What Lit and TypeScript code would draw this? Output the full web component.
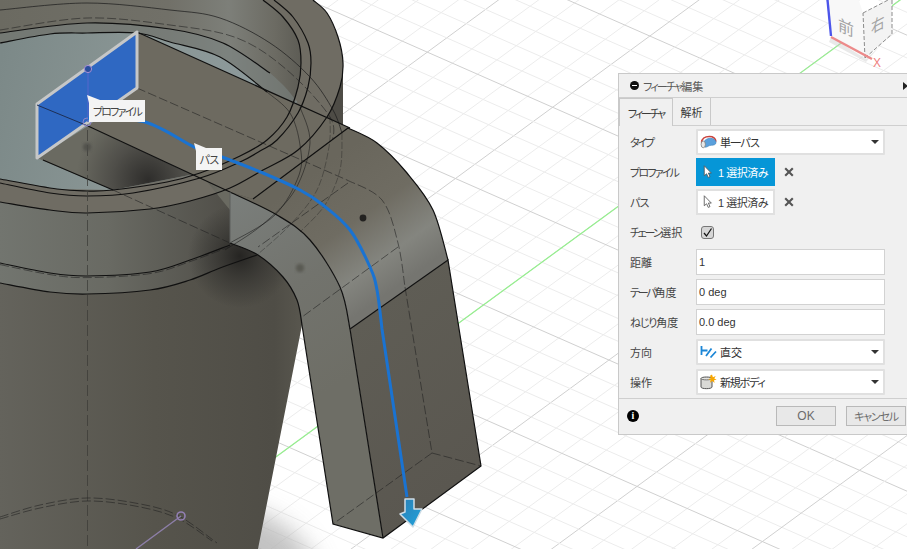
import { LitElement, html, css, svg } from "lit";
import { customElement } from "lit/decorators.js";

type P = [number, number];

// Smooth curve through traced points (Catmull-Rom to Bezier).
function cr(pts: P[], close = ""): string {
  let d = `M${pts[0][0]} ${pts[0][1]}`;
  for (let i = 0; i < pts.length - 1; i++) {
    const p0 = pts[Math.max(0, i - 1)], p1 = pts[i], p2 = pts[i + 1], p3 = pts[Math.min(pts.length - 1, i + 2)];
    const c1x = p1[0] + (p2[0] - p0[0]) / 6, c1y = p1[1] + (p2[1] - p0[1]) / 6;
    const c2x = p2[0] - (p3[0] - p1[0]) / 6, c2y = p2[1] - (p3[1] - p1[1]) / 6;
    d += `C${c1x.toFixed(1)} ${c1y.toFixed(1)} ${c2x.toFixed(1)} ${c2y.toFixed(1)} ${p2[0]} ${p2[1]}`;
  }
  return d + close;
}

const L1: P[] = [[0,179],[57,189],[87,191],[113,190],[167,182],[200,173],[240,156],[267,140],[287,117],[298,87],[301,63],[298,40],[283,17],[263,0]];
const L2: P[] = [[0,183],[50,193],[87,196],[133,193],[200,178],[240,162],[260,151],[277,140],[298,113],[308,87],[311,63],[308,43],[293,17],[274,0]];
const L3: P[] = [[0,202],[50,210],[87,213],[150,209],[190,201],[230,188],[263,170],[298,150],[327,117],[340,87],[343,63],[338,37],[327,13],[313,0]];
const L4: P[] = [[0,263],[50,273],[87,276],[150,272],[190,260],[230,245]];
const L5: P[] = [[0,283],[50,292],[87,294],[150,290],[190,280],[220,268],[257,255]];
const A: P[] = [[0,10],[87,3],[170,10],[220,18],[270,43],[310,77],[333,110],[342,133]];
const B: P[] = [[0,30],[87,18],[170,25],[237,38],[287,70],[330,117],[332,143]];
const C: P[] = [[0,33],[87,23],[170,29],[223,43],[270,73],[300,107],[310,143]];
const D: P[] = [[0,43],[50,34],[87,33],[137,33],[170,42],[220,57],[267,92]];
const G1: P[] = [[267,92],[290,113],[300,145],[299,175],[275,215],[230,243]];
const G2: P[] = [[300,107],[310,143],[295,190],[262,225],[225,250]];
const G3: P[] = [[330,117],[329,147],[317,190],[290,225],[257,255]];
const G4: P[] = [[342,133],[340,170],[325,205],[300,232]];
const mid: P[] = [[230,192],[277,215],[310,240],[340,287],[350,329]];
const inner: P[] = [[230,243],[258,255],[283,277],[297,300],[302,325]];
const outer: P[] = [[348,128],[377,143],[407,173],[433,210],[448,260]];
const backDash: P[] = [[347,180],[382,200],[398,243],[405,287]];
const path: P[] = [[88,118],[145,122],[196,148],[222,157],[263,173],[300,190],[323,205],[350,230],[370,267],[377,290],[382,329]];

const rev = (p: P[]) => [...p].reverse();

function grid() {
  const out = [];
  for (let k = -40; k <= 40; k++) {
    const major = k % 5 === 0;
    const a = 107 + 22.8 * k;
    out.push(svg`<line class=${major ? "gmaj" : "gmin"} x1="0" y1=${a + 0.44 * (0 - 552)} x2="907" y2=${a + 0.44 * (907 - 552)}></line>`);
    const b = 427 + 29.4 * k;
    out.push(svg`<line class=${major ? "gmaj" : "gmin"} x1="0" y1=${b - 0.733 * (0 - 317)} x2="907" y2=${b - 0.733 * (907 - 317)}></line>`);
  }
  return out;
}

function scene() {
  return svg`
  <svg class="scene" viewBox="0 0 907 549" width="907" height="549">
    <defs>
      <linearGradient id="body" x1="0" x2="1" y1="0" y2="0">
        <stop offset="0" stop-color="#64635c"/><stop offset=".45" stop-color="#56544c"/>
        <stop offset=".8" stop-color="#4f4d46"/><stop offset=".93" stop-color="#5e5c53"/><stop offset="1" stop-color="#6c6a61"/>
      </linearGradient>
      <linearGradient id="band" gradientUnits="userSpaceOnUse" x1="0" x2="240" y1="0" y2="0">
        <stop offset="0" stop-color="#72756f"/><stop offset=".45" stop-color="#696a63"/><stop offset="1" stop-color="#4e4c46"/>
      </linearGradient>
      <linearGradient id="wall" gradientUnits="userSpaceOnUse" x1="0" x2="305" y1="0" y2="0">
        <stop offset="0" stop-color="#6b6a61"/><stop offset=".55" stop-color="#717068"/>
        <stop offset=".75" stop-color="#7d7f79"/><stop offset=".9" stop-color="#6c6b63"/><stop offset="1" stop-color="#5b5a53"/>
      </linearGradient>
      <linearGradient id="cavity" gradientUnits="userSpaceOnUse" x1="0" x2="280" y1="60" y2="120">
        <stop offset="0" stop-color="#7c8988"/><stop offset=".5" stop-color="#8a9695"/><stop offset="1" stop-color="#8d9a9c"/>
      </linearGradient>
      <linearGradient id="bend" gradientUnits="userSpaceOnUse" x1="310" y1="175" x2="392" y2="290">
        <stop offset="0" stop-color="#69665c"/><stop offset=".45" stop-color="#6f6c62"/>
        <stop offset=".78" stop-color="#84857f"/><stop offset="1" stop-color="#757570"/>
      </linearGradient>
      <linearGradient id="strip" gradientUnits="userSpaceOnUse" x1="230" y1="200" x2="345" y2="380">
        <stop offset="0" stop-color="#7a7e7b"/><stop offset=".5" stop-color="#72736d"/><stop offset="1" stop-color="#6e6e66"/>
      </linearGradient>
      <linearGradient id="front" gradientUnits="userSpaceOnUse" x1="350" y1="330" x2="470" y2="470">
        <stop offset="0" stop-color="#5f5d55"/><stop offset="1" stop-color="#5a5750"/>
      </linearGradient>
      <radialGradient id="dark" gradientUnits="userSpaceOnUse" cx="148" cy="180" r="72">
        <stop offset="0" stop-color="#2e2d2b"/><stop offset=".5" stop-color="#4f4e49"/><stop offset="1" stop-color="#6a6a61"/>
      </radialGradient>
      <radialGradient id="under" gradientUnits="userSpaceOnUse" cx="240" cy="256" r="52">
        <stop offset="0" stop-color="#232220" stop-opacity=".95"/><stop offset=".6" stop-color="#33322f" stop-opacity=".5"/><stop offset="1" stop-color="#33322f" stop-opacity="0"/>
      </radialGradient>
      <linearGradient id="arrow" x1="0" x2="1" y1="0" y2="1">
        <stop offset="0" stop-color="#2b7fb5"/><stop offset="1" stop-color="#21a3dc"/>
      </linearGradient>
      <filter id="blur" x="-50%" y="-50%" width="200%" height="200%"><feGaussianBlur stdDeviation="12"/></filter>
      <filter id="soft" x="-20%" y="-20%" width="140%" height="140%"><feGaussianBlur stdDeviation="1.6"/></filter>
    </defs>

    <rect width="907" height="549" fill="#fff"></rect>
    ${grid()}
    <line class="green" x1="258" y1="470" x2="907" y2="-5"></line>
    <ellipse cx="205" cy="590" rx="115" ry="88" fill="#b4b4b4" opacity=".8" filter="url(#blur)"></ellipse>

    <!-- view cube -->
    <polygon points="828,-2 832,36 865,58 863,13 858,-2" fill="#f8f8f8"></polygon>
    <polygon points="865,58 892,34 892,-2 863,13" fill="#f3f3f3"></polygon>
    <polygon points="831,37 866,59 892,35 880,46 866,62 829,42" fill="#c9c9c9" opacity=".4"></polygon>
    <line class="cubeedge" x1="865" y1="58" x2="863" y2="13"></line>
    <line class="cubeedge" x1="865" y1="58" x2="892" y2="34"></line>
    <line class="cubeedge" x1="892" y1="34" x2="892" y2="-2"></line>
    <line class="cubeedge" x1="863" y1="13" x2="892" y2="-2"></line>
    <line x1="827.5" y1="0" x2="831" y2="36" stroke="#4c55ea" stroke-width="2.4"></line>
    <line x1="831" y1="37" x2="872" y2="59" stroke="#ec8a8a" stroke-width="2.4"></line>
    <text class="cubetxt" transform="translate(838,30) skewY(24)">前</text>
    <text class="cubetxt" transform="translate(871,34) skewY(-28) scale(.85,1)">右</text>
    <text class="xlabel" x="873" y="67">X</text>

    <!-- mug body, painted from the bottom up -->
    <path fill="url(#body)" d="M0 0H313L343 67V130L302 325L258 549H0Z"></path>
    <path fill="url(#band)" d=${cr(L5) + "L343 130V60L0 180Z"}></path>
    <path d="M180 200H302V325H180Z" fill="url(#under)"></path>
    <path fill="#6f6c63" d=${cr(L3) + "L0 0Z"}></path>
    <path fill="url(#wall)" d=${cr(L1) + "L0 0Z"}></path>
    <path fill="#7b8584" opacity=".55" d=${cr(C) + cr(rev(D)).replace("M", "L") + "Z"}></path>
    <path fill="url(#cavity)" d=${cr(D) + "L292 113L297 100L267 140L240 156L200 173L113 190L57 189L0 179Z"}></path>

    <!-- swept box over the cup -->
    <polygon fill="url(#dark)" points="37,158 88,126 230,192 230,210 200,173 113,190"></polygon>
    <polygon fill="#6d6a60" points="137,32 350,128 253,199 230,192 88,126 137,88"></polygon>

    <!-- rim lines on the box and the cup -->
    <path class="solid" d=${cr(L1)}></path>
    <path class="solid" d=${cr(L2)}></path>
    <path class="solid" d=${cr(L3)}></path>
    <path class="thin" d=${cr(A)}></path>
    <path class="dash" d=${cr(B)}></path>
    <path class="solid" d=${cr(C.slice(0, 5))}></path>
    <path class="solid" d=${cr(D)}></path>
    <path class="solid" d=${cr(L4)}></path>
    <path class="dash" transform="translate(0,1.6)" d=${cr(L4)}></path>
    <path class="solid" d=${cr(L5)}></path>

    <!-- handle -->
    <path fill="url(#strip)" d=${cr(mid) + "L383 538L333 524L302 325" + cr(rev(inner)).replace("M302 325", "") + "Z"}></path>
    <path fill="url(#bend)" d=${cr(outer) + "L350 329" + cr(rev(mid)).replace("M350 329", "") + "L253 199Z"}></path>
    <polygon fill="url(#front)" points="350,329 448,260 481,466 383,538"></polygon>

    <!-- hidden edges seen through -->
    <path class="ghost" d=${cr(G1)}></path>
    <path class="ghost" d=${cr(G2)}></path>
    <path class="ghostdash" d=${cr(G3)}></path>
    <path class="ghostdash" d=${cr(G4)}></path>
    <path class="dash" d="M137 88L347 180"></path>
    <path class="dash" d=${cr(backDash)}></path>
    <path class="dash" d="M405 287L432 453L481 466M432 453L333 524"></path>
    <path class="dash" d="M348 183L258 247M398 247L302 317"></path>
    <path class="dash" d="M113 190L230 243"></path>

    <!-- handle edges -->
    <path class="solid" d=${cr(outer)}></path>
    <path class="solid" d=${cr(mid)}></path>
    <path class="solid" d=${cr(inner)}></path>
    <path class="solid" d="M137 32L350 128M348 128L253 199M88 126L230 192M43 160L113 190M302 325L333 524L383 538L481 466L448 260L350 329L383 538"></path>
    <line x1="230" y1="192" x2="230" y2="243" stroke="#5d5f5c" stroke-width="1"></line>

    <!-- axis and construction marks -->
    <line class="axis" x1="87.5" y1="70" x2="87.5" y2="549"></line>
    <path class="dash" d=${cr([[0,517],[40,505],[87,498],[135,503],[177,515],[217,543]])}></path>
    <path class="dash" d=${cr([[0,519],[40,508],[87,501],[135,506],[177,518],[212,541]])}></path>
    <line x1="136" y1="549" x2="181" y2="516" stroke="#8d7fa8" stroke-width="1.4"></line>
    <circle cx="181" cy="516" r="4" fill="none" stroke="#9380b4" stroke-width="1.6"></circle>
    <circle cx="87" cy="147" r="4" fill="#4c4b46" opacity=".8" filter="url(#soft)"></circle>
    <circle cx="300" cy="268" r="4.2" fill="#55544e" opacity=".85" filter="url(#soft)"></circle>
    <circle cx="363" cy="218" r="3.4" fill="#232220"></circle>

    <!-- profile -->
    <polygon points="37,104 137,32 137,88 37,158" fill="#2f68c2" stroke="#c6c7c7" stroke-width="3" stroke-linejoin="round"></polygon>
    <line x1="37" y1="105" x2="88" y2="126" stroke="#1d2f55" stroke-width="1"></line>
    <line x1="88" y1="70" x2="88" y2="122" stroke="#4a67c8" stroke-width="1.5"></line>
    <circle cx="88" cy="69" r="3.6" fill="#2a4f9c" stroke="#a78fd6" stroke-width="1"></circle>
    <circle cx="87" cy="122" r="4" fill="none" stroke="#8f86c8" stroke-width="1"></circle>

    <!-- sweep path -->
    <path d=${cr(path) + "L407 497"} fill="none" stroke="#1a73d2" stroke-width="3"></path>
    <polygon points="405,499 414,499 414,509 422,509 413,527 400,514 405,512" fill="url(#arrow)" stroke="#cfdde6" stroke-width="1.5" stroke-linejoin="round"></polygon>
    <polygon points="87,95 100,100 89,103" fill="#f4f4f4"></polygon>
    <polygon points="194,143 206,148 196,151" fill="#f4f4f4"></polygon>
  </svg>`;
}

const cursor = svg`
  <svg class="ic" viewBox="0 0 12 17" width="10" height="16">
    <path d="M1.5 1V13L4.3 10.6L6.3 15L8.4 14L6.4 9.8H10Z" fill="#fff" stroke="#555" stroke-width="1"></path>
  </svg>`;

const sweepIcon = svg`
  <svg class="ic" viewBox="0 0 18 16" width="17" height="15">
    <path d="M1.5 8C2 3.5 6 1.5 10 1.5C13.5 1.5 16.5 3.5 17 7" fill="none" stroke="#c8433d" stroke-width="1.6"></path>
    <path d="M4 9C4 5 8 3.5 11 3.5C14.5 3.5 17 5.5 17 8C17 10.5 14 11 12 11C9 11 8 13 6 13C4.5 13 4 11 4 9Z" fill="#5aa0dc" stroke="#3c7fb8" stroke-width=".6"></path>
    <ellipse cx="3.4" cy="10" rx="2.3" ry="3.6" fill="#e8e8e8" stroke="#777" stroke-width=".8"></ellipse>
  </svg>`;

const dirIcon = svg`
  <svg class="ic" viewBox="0 0 17 14" width="17" height="14">
    <path d="M1.5 1V10M1.5 5.5H7.5" stroke="#1b86d6" stroke-width="1.8" fill="none"></path>
    <path d="M6 11L11.5 3.5M10.5 12.5L16 6.5" stroke="#1b86d6" stroke-width="1.8" fill="none"></path>
  </svg>`;

const bodyIcon = svg`
  <svg class="ic" viewBox="0 0 17 16" width="17" height="16">
    <path d="M1 4.5C1 2.5 12 2.5 12 4.5V13C12 15.2 1 15.2 1 13Z" fill="#d9d9d6" stroke="#555" stroke-width="1"></path>
    <path d="M1 4.5C1 6.3 12 6.3 12 4.5" fill="#efefec" stroke="#555" stroke-width=".8"></path>
    <path d="M12 .5L12.9 3.2L15.7 2L14.3 4.6L16.6 5.7L14 6.3L14.6 9L12.3 7.1L10 8.7L10.6 6L8.2 5.2L10.8 4.3L10 1.8Z" fill="#f7a600"></path>
  </svg>`;

@customElement("app-root")
export class AppRoot extends LitElement {
  static styles = css`
    :host { display: block; position: relative; width: 907px; height: 549px; overflow: hidden; background: #fff;
      font-family: "Liberation Sans", "Noto Sans CJK JP", sans-serif; font-size: 11px; color: #3a3a3a;
      font-feature-settings: "palt"; white-space: nowrap; }
    .scene { display: block; }
    .gmin { stroke: #ececec; stroke-width: 1; }
    .gmaj { stroke: #d0d0d0; stroke-width: 1; }
    .green { stroke: #95f08e; stroke-width: 1.2; }
    .solid { fill: none; stroke: #101010; stroke-width: 1.2; }
    .thin { fill: none; stroke: #1c1c1c; stroke-width: .9; opacity: .8; }
    .dash { fill: none; stroke: #1f1f1f; stroke-width: .8; stroke-dasharray: 9 3; opacity: .7; }
    .ghost { fill: none; stroke: #161616; stroke-width: .9; opacity: .6; }
    .ghostdash { fill: none; stroke: #1a1a1a; stroke-width: .8; stroke-dasharray: 7 2; opacity: .45; }
    .axis { stroke: #3c3c38; stroke-width: 1; stroke-dasharray: 11 4; opacity: .75; }
    .cubeedge { stroke: #8c8c8c; stroke-width: 1; stroke-dasharray: 4 2; }
    .cubetxt { font-size: 16px; fill: #a3a3a3; font-family: "Noto Sans CJK JP", sans-serif; }
    .xlabel { font-size: 12px; fill: #ef8080; font-family: "Liberation Sans", sans-serif; }

    .s0 { letter-spacing: -.5px; }
    .s1 { letter-spacing: -.8px; }
    .s2 { letter-spacing: -1.2px; }
    .s3 { letter-spacing: -1.5px; }
    .s4 { letter-spacing: -1.8px; }
    .s5 { letter-spacing: -2.2px; }

    .tag { position: absolute; background: #f4f4f4; display: flex; align-items: center; justify-content: center;
      height: 22px; font-size: 11px; color: #444; }
    .tag-profile { left: 89px; top: 100px; width: 56px; }
    .tag-path { left: 196px; top: 148px; width: 26px; }

    .panel { position: absolute; left: 618px; top: 73px; width: 289px; height: 362px; box-sizing: border-box;
      background: #f0f0f0; border: 1px solid #c9c9c9; border-right: 0; display: flex; flex-direction: column; }
    .head { height: 23px; flex: none; display: flex; align-items: center; padding-left: 11px; gap: 4px;
      border-bottom: 1px solid #cfcfcf; color: #5a5a5a; }
    .head .min { width: 9px; height: 9px; border-radius: 50%; background: #111; position: relative; flex: none; }
    .head .min::after { content: ""; position: absolute; left: 2px; right: 2px; top: 4px; height: 1px; background: #fff; }
    .head .title { flex: 1; }
    .head .tri { width: 0; height: 0; border-left: 5px solid #222; border-top: 4px solid transparent; border-bottom: 4px solid transparent; margin-right: -1px; }
    .tabs { height: 28px; flex: none; display: flex; border-bottom: 1px solid #cfcfcf; box-sizing: border-box; }
    .tab { display: flex; align-items: center; justify-content: center; border-right: 1px solid #c9c9c9; box-sizing: border-box; height: 27px; }
    .tab.on { width: 54px; background: #f0f0f0; height: 28px; border: 1px solid #c9c9c9; border-bottom: 0; position: relative; z-index: 1; }
    .tab.off { width: 38px; }
    .form { flex: 1; display: grid; grid-template-columns: 66px 189px; grid-auto-rows: 26px; row-gap: 4px; padding: 3px 0 0 11px; align-content: start; }
    .lab { display: flex; align-items: center; color: #444; }
    .field { box-sizing: border-box; background: #fff; border: 1px solid #d2d2d2; display: flex; align-items: center; padding-left: 2px; color: #333; height: 26px; }
    .sel { border: 2px solid #e0e0e0; border-radius: 1px; padding-left: 2px; gap: 3px; }
    .sel .txt { flex: 1; }
    .sel .caret { width: 0; height: 0; border-top: 4px solid #333; border-left: 4px solid transparent; border-right: 4px solid transparent; margin-right: 4px; }
    .pick { display: flex; align-items: center; gap: 9px; }
    .btn { width: 79px; height: 28px; box-sizing: border-box; display: flex; align-items: center; gap: 5px; padding-left: 7px; }
    .btn.active { background: #0696d7; color: #fff; }
    .btn.idle { background: #fff; border: 2px solid #e0e0e0; padding-left: 5px; height: 26px; }
    .x { width: 10px; height: 10px; flex: none; }
    .check { width: 13px; height: 13px; box-sizing: border-box; margin-left: 5px; border: 1px solid #777; border-radius: 3px; background: #d6d6d6; display: flex; align-items: center; justify-content: center; }
    .cellc { display: flex; align-items: center; }
    .foot { height: 36px; flex: none; border-top: 1px solid #cfcfcf; display: flex; align-items: center; padding-left: 8px; box-sizing: border-box; padding-bottom: 1px; }
    .info { width: 12px; height: 12px; border-radius: 50%; background: #000; color: #fff; font: bold 10px/12px "Liberation Serif", serif; text-align: center; flex: none; }
    .push { width: 60px; height: 20px; box-sizing: border-box; border: 1px solid #b9b9b9; background: #e8e8e8; color: #6c6c6c; display: flex; align-items: center; justify-content: center; }
    .ok { margin-left: 137px; font-size: 12px; }
    .cancel { margin-left: 10px; }
    .ic { flex: none; display: block; }
  `;

  private xIcon() {
    return svg`<svg class="x" viewBox="0 0 10 10"><path d="M1.2 1.2L8.8 8.8M8.8 1.2L1.2 8.8" stroke="#555" stroke-width="2.1"></path></svg>`;
  }

  render() {
    return html`
      ${scene()}
      <div class="tag tag-profile s4">プロファイル</div>
      <div class="tag tag-path s1">パス</div>
      <div class="panel">
        <div class="head"><span class="min"></span><span class="title"><span class="s4">フィーチャ</span>編集</span><span class="tri"></span></div>
        <div class="tabs"><div class="tab on s5">フィーチャ</div><div class="tab off">解析</div></div>
        <div class="form">
          <div class="lab s5">タイプ</div>
          <div class="field sel">${sweepIcon}<span class="txt s1">単一パス</span><span class="caret"></span></div>
          <div class="lab s4">プロファイル</div>
          <div class="pick"><div class="btn active">${cursor}<span class="s0">1 選択済み</span></div>${this.xIcon()}</div>
          <div class="lab s1">パス</div>
          <div class="pick"><div class="btn idle">${cursor}<span class="s0">1 選択済み</span></div>${this.xIcon()}</div>
          <div class="lab"><span class="s5">チェーン</span><span>選択</span></div>
          <div class="cellc"><span class="check"><svg viewBox="0 0 11 11" width="11" height="11"><path d="M2 6L4.5 9L9.5 1.5" fill="none" stroke="#111" stroke-width="1.2"></path></svg></span></div>
          <div class="lab">距離</div>
          <div class="field">1</div>
          <div class="lab"><span class="s5">テーパ</span><span>角度</span></div>
          <div class="field">0 deg</div>
          <div class="lab"><span class="s2">ねじり</span><span>角度</span></div>
          <div class="field">0.0 deg</div>
          <div class="lab">方向</div>
          <div class="field sel">${dirIcon}<span class="txt">直交</span><span class="caret"></span></div>
          <div class="lab">操作</div>
          <div class="field sel">${bodyIcon}<span class="txt s2">新規ボディ</span><span class="caret"></span></div>
        </div>
        <div class="foot"><span class="info">i</span><span class="push ok">OK</span><span class="push cancel s2">キャンセル</span></div>
      </div>
    `;
  }
}
